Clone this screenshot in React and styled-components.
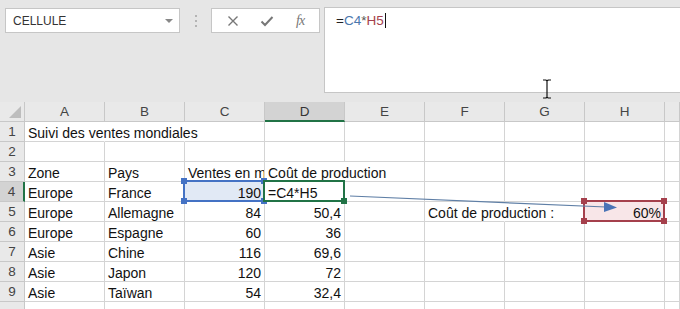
import React from 'react';
import styled, { createGlobalStyle, css } from 'styled-components';

const GlobalStyle = createGlobalStyle`
  html, body {
    margin: 0;
    padding: 0;
    background: #e6e6e6;
    font-family: "Liberation Sans", Arial, sans-serif;
  }
`;

const Window = styled.div`
  width: 680px;
  height: 309px;
  overflow: hidden;
  position: relative;
  background: #e6e6e6;
`;

const TopBar = styled.div`
  height: 102px;
  display: flex;
  align-items: flex-start;
  padding: 7px 0 0 5px;
  box-sizing: border-box;
`;

const NameBox = styled.div`
  width: 175px;
  height: 25px;
  margin-top: 1px;
  background: #fff;
  border: 1px solid #c6c6c6;
  box-sizing: border-box;
  display: flex;
  align-items: center;
  justify-content: space-between;
  padding: 0 6px 0 7px;
  font-size: 12px;
  color: #333;
`;

const DropArrow = styled.span`
  width: 0;
  height: 0;
  border-left: 4px solid transparent;
  border-right: 4px solid transparent;
  border-top: 4px solid #888;
`;

const Grip = styled.div`
  width: 31px;
  display: flex;
  flex-direction: column;
  align-items: center;
  gap: 3px;
  padding-top: 8px;

  span {
    width: 2px;
    height: 2px;
    background: #b4b4b4;
  }
`;

const ButtonBox = styled.div`
  width: 109px;
  height: 25px;
  margin-top: 1px;
  background: #fff;
  border: 1px solid #c6c6c6;
  box-sizing: border-box;
  display: flex;
  align-items: center;
  justify-content: space-around;
  padding: 0 4px;
`;

const Fx = styled.span`
  font-family: "Liberation Serif", "Times New Roman", serif;
  font-style: italic;
  font-size: 14px;
  color: #777;
  letter-spacing: -1px;
`;

const FormulaBar = styled.div`
  margin-left: 4px;
  flex: 1;
  height: 86px;
  background: #fff;
  border: 1px solid #c6c6c6;
  border-right: none;
  box-sizing: border-box;
  padding: 5px 0 0 11px;
  font-size: 13.5px;
  position: relative;
`;

const Tok = styled.span`
  color: ${(p) => p.$c || '#222'};
`;

const Caret = styled.span`
  display: inline-block;
  width: 1px;
  height: 15px;
  background: #111;
  vertical-align: -3px;
  margin-left: 1px;
`;

const IBeam = styled.svg`
  position: absolute;
  left: 217px;
  top: 71px;
`;

const Sheet = styled.div`
  position: relative;
  display: grid;
  grid-template-columns: 25px repeat(8, 80px) 1fr;
  grid-auto-rows: 20px;
  background: #fff;
  font-size: 14px;
  color: #111;
`;

const Head = styled.div`
  background: ${(p) => (p.$active ? '#d3d3d3' : '#e9e9e9')};
  border-right: 1px solid #c8c8c8;
  border-bottom: 1px solid #c8c8c8;
  box-sizing: border-box;
  display: flex;
  align-items: center;
  justify-content: center;
  font-size: 13.5px;
  color: #444;
  position: relative;
  ${(p) =>
    p.$active &&
    p.$col &&
    css`
      border-bottom: 2px solid #217346;
      color: #333;
    `}
  ${(p) =>
    p.$active &&
    p.$row &&
    css`
      border-right: 2px solid #217346;
    `}
`;

const Corner = styled(Head)`
  align-items: flex-end;
  justify-content: flex-end;
  padding: 0 3px 3px 0;
`;

const Triangle = styled.span`
  width: 0;
  height: 0;
  border-left: 12px solid transparent;
  border-bottom: 12px solid #bdbdbd;
`;

const Cell = styled.div`
  position: relative;
  border-right: ${(p) => (p.$noRight ? '1px solid transparent' : '1px solid #d4d4d4')};
  border-bottom: 1px solid #d4d4d4;
  box-sizing: border-box;
  padding: 3px 3px 0;
  line-height: 17px;
  white-space: nowrap;
  text-align: ${(p) => p.$align || 'left'};
  overflow: ${(p) => (p.$clip ? 'hidden' : 'visible')};
  background: ${(p) => p.$bg || 'transparent'};
  z-index: ${(p) => (p.$sel ? 2 : 1)};
`;

const Frame = styled.span`
  position: absolute;
  left: -2px;
  top: -2px;
  right: -1px;
  bottom: -1px;
  border: 2px solid ${(p) => p.$c};
  pointer-events: none;
`;

const Handle = styled.span`
  position: absolute;
  width: 6px;
  height: 6px;
  background: ${(p) => p.$c};
  ${(p) => (p.$top ? 'top: -4px;' : 'bottom: -3px;')}
  ${(p) => (p.$left ? 'left: -4px;' : 'right: -3px;')}
`;

const Arrow = styled.svg`
  position: absolute;
  left: 0;
  top: 0;
  z-index: 5;
  pointer-events: none;
`;

const COLORS = {
  blue: { c: '#4472c4', bg: '#e1e9f5' },
  green: { c: '#217346', bg: '#fff' },
  red: { c: '#a5404c', bg: '#f8e6e8' },
};

const cols = ['A', 'B', 'C', 'D', 'E', 'F', 'G', 'H', ''];

// row -> column index -> cell spec
const data = {
  1: { 0: { t: 'Suivi des ventes mondiales', noRight: true }, 1: { noRight: true } },
  3: {
    0: { t: 'Zone' },
    1: { t: 'Pays' },
    2: { t: 'Ventes en millions', clip: true },
    3: { t: 'Coût de production', noRight: true },
  },
  4: {
    0: { t: 'Europe' },
    1: { t: 'France' },
    2: { t: '190', align: 'right', sel: 'blue' },
    3: { t: '=C4*H5', sel: 'green' },
  },
  5: {
    0: { t: 'Europe' },
    1: { t: 'Allemagne' },
    2: { t: '84', align: 'right' },
    3: { t: '50,4', align: 'right' },
    5: { t: 'Coût de production :', noRight: true },
    7: { t: '60%', align: 'right', sel: 'red' },
  },
  6: { 0: { t: 'Europe' }, 1: { t: 'Espagne' }, 2: { t: '60', align: 'right' }, 3: { t: '36', align: 'right' } },
  7: { 0: { t: 'Asie' }, 1: { t: 'Chine' }, 2: { t: '116', align: 'right' }, 3: { t: '69,6', align: 'right' } },
  8: { 0: { t: 'Asie' }, 1: { t: 'Japon' }, 2: { t: '120', align: 'right' }, 3: { t: '72', align: 'right' } },
  9: { 0: { t: 'Asie' }, 1: { t: 'Taïwan' }, 2: { t: '54', align: 'right' }, 3: { t: '32,4', align: 'right' } },
};

const Selection = ({ kind }) => {
  const { c } = COLORS[kind];
  return (
    <>
      <Frame $c={c} />
      {kind === 'green' ? (
        <Handle $c={c} />
      ) : (
        <>
          <Handle $c={c} $top $left />
          <Handle $c={c} $top />
          <Handle $c={c} $left />
          <Handle $c={c} />
        </>
      )}
    </>
  );
};

const App = () => {
  const rows = [1, 2, 3, 4, 5, 6, 7, 8, 9, 10];
  return (
    <Window>
      <GlobalStyle />
      <TopBar>
        <NameBox>
          CELLULE
          <DropArrow />
        </NameBox>
        <Grip>
          <span />
          <span />
          <span />
        </Grip>
        <ButtonBox>
          <svg width="12" height="12" viewBox="0 0 12 12">
            <path d="M1.5 1.5 L10.5 10.5 M10.5 1.5 L1.5 10.5" stroke="#777" strokeWidth="1.4" />
          </svg>
          <svg width="14" height="12" viewBox="0 0 14 12">
            <path d="M1.5 6.5 L5 10 L12.5 2" stroke="#777" strokeWidth="2" fill="none" />
          </svg>
          <Fx>fx</Fx>
        </ButtonBox>
        <FormulaBar>
          <Tok>=</Tok>
          <Tok $c="#4a78ad">C4</Tok>
          <Tok $c="#555">*</Tok>
          <Tok $c="#a5404c">H5</Tok>
          <Caret />
          <IBeam width="10" height="20" viewBox="0 0 10 20">
            <path d="M1 1 H4 M6 1 H9 M5 1.5 V18.5 M1 19 H4 M6 19 H9 M4 1 L5 2 L6 1 M4 19 L5 18 L6 19" stroke="#111" strokeWidth="1.2" fill="none" />
          </IBeam>
        </FormulaBar>
      </TopBar>

      <Sheet>
        <Corner>
          <Triangle />
        </Corner>
        {cols.map((c, i) => (
          <Head key={`h${i}`} $col $active={c === 'D'}>
            {c}
          </Head>
        ))}
        {rows.map((r) => (
          <React.Fragment key={r}>
            <Head $row $active={r === 4}>
              {r < 10 ? r : ''}
            </Head>
            {cols.map((_, ci) => {
              const cell = (data[r] && data[r][ci]) || {};
              const sel = cell.sel;
              return (
                <Cell
                  key={ci}
                  $align={cell.align}
                  $clip={cell.clip}
                  $noRight={cell.noRight}
                  $sel={sel}
                  $bg={sel ? COLORS[sel].bg : undefined}
                >
                  {cell.t}
                  {sel && <Selection kind={sel} />}
                </Cell>
              );
            })}
          </React.Fragment>
        ))}
        <Arrow width="680" height="207">
          <line x1="350" y1="94" x2="606" y2="105" stroke="#5f7fa6" strokeWidth="1.2" />
          <polygon points="617,105.5 604,100 604,110" fill="#4a74b6" />
        </Arrow>
      </Sheet>
    </Window>
  );
};

export default App;
